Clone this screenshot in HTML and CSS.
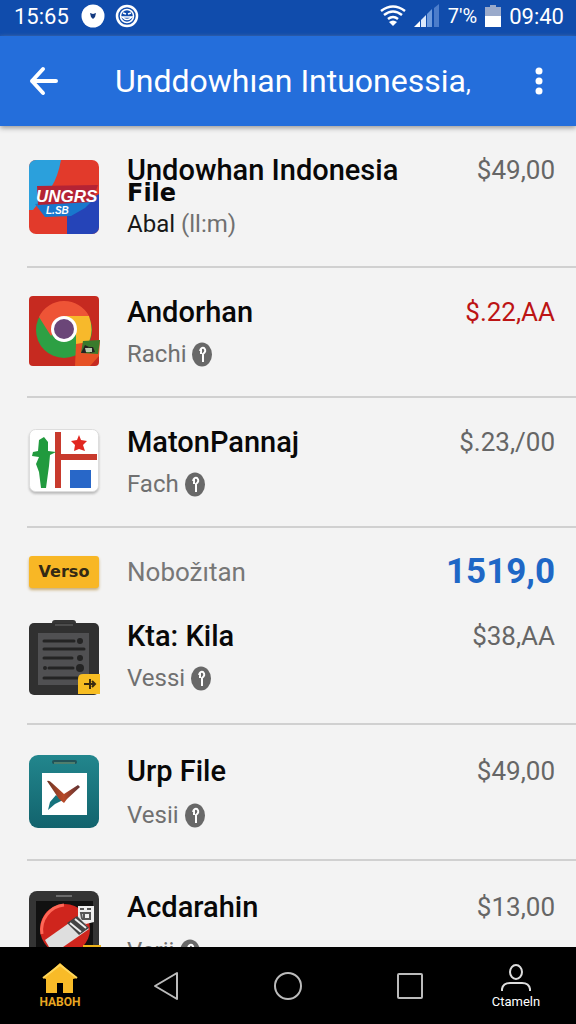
FILE: index.html
```html
<!DOCTYPE html>
<html lang="id">
<head>
    <meta charset="UTF-8">
    <meta name="viewport" content="width=device-width, initial-scale=1.0">
    <title>Unddowhıan Intuonessia</title>
    <link rel="stylesheet" href="styles.css">
</head>
<body>
    <div class="status-bar">
        <span>15:65</span>
        <svg class="status-dot" viewBox="0 0 24 24" width="24" height="24">
            <circle cx="12" cy="12" r="11.5" fill="#fff"/>
            <path d="M9 9l3 1 3-1-1 4-2 2-2-2z" fill="#143a80"/>
        </svg>
        <svg viewBox="0 0 24 24" width="24" height="24" fill="none" stroke="#fff">
            <circle cx="12" cy="12" r="10" stroke-width="2.5"/>
            <circle cx="12" cy="12" r="6.5" stroke-width="1.5"/>
            <path d="M8 9l3 1M16 9l-3 1M7 13q5 5 10 0z" stroke-width="1.5"/>
        </svg>
        <div class="status-right">
            <svg viewBox="0 0 26 22" width="26" height="22" fill="none" stroke="#fff" stroke-width="2.5">
                <path d="M1 6q12-9 24 0M4 10q9-7 18 0M8 14q5-4 10 0"/>
                <path d="M9 17q4-3 8 0l-4 4z" fill="#fff" stroke="none"/>
            </svg>
            <svg viewBox="0 0 26 24" width="26" height="24">
                <path d="M0 23l6-6v6z" fill="#fff"/>
                <path d="M7 16l5-5v12H7z" fill="#dce8fa"/>
                <path d="M13 10l5-5v18h-5z" fill="#6f9bdc"/>
                <path d="M20 4l5-4v23h-5z" fill="#4c7dcb"/>
            </svg>
            <span class="percent">7'%</span>
            <svg viewBox="0 0 16 24" width="16" height="24">
                <path d="M5 1h6v2h5v20H0V3h5z" fill="#9aaacb"/>
                <path d="M0 12h16v11H0z" fill="#fff"/>
            </svg>
            <span>09:40</span>
        </div>
    </div>

    <header class="app-bar">
        <button class="icon-button" aria-label="Back">
            <svg viewBox="0 0 30 30" width="30" height="30" fill="none" stroke="#fff" stroke-width="4" stroke-linecap="round" stroke-linejoin="round">
                <path d="M27 15H3M14 3L3 15l11 12"/>
            </svg>
        </button>
        <h1>Unddowhıan Intuonessia<small>,</small></h1>
        <button class="icon-button" aria-label="Menu">
            <svg viewBox="0 0 8 28" width="8" height="28" fill="#fff">
                <circle cx="4" cy="4" r="3.5"/><circle cx="4" cy="14" r="3.5"/><circle cx="4" cy="24" r="3.5"/>
            </svg>
        </button>
    </header>

    <main class="list">
        <article class="item item-first">
            <svg class="app-icon" viewBox="0 0 70 74" width="70" height="74">
                <clipPath id="tile"><rect width="70" height="74" rx="7"/></clipPath>
                <g clip-path="url(#tile)">
                    <path d="M0 0h70v74H0z" fill="#e23a2b"/>
                    <path d="M0 0h32q-3 16-9 26L4 50H0z" fill="#2ba0dc"/>
                    <path d="M38 52l32-18v40H38z" fill="#2544b8"/>
                    <path d="M6 44l60-6-10 10-14 8-26 1z" fill="#1878cd"/>
                    <path d="M8 26l61-1-6 17-54 3z" fill="#b42335"/>
                    <text x="7" y="42" class="logo-text" font-size="17">UNGRS</text>
                    <text x="17" y="54" class="logo-text" font-size="10">L.SB</text>
                </g>
            </svg>
            <div>
                <h2>Undowhan Indonesia</h2>
                <h3>File</h3>
                <p><span class="author">Abal</span> (ll:m)</p>
            </div>
            <span class="price">$49,00</span>
        </article>

        <article class="item">
            <svg class="app-icon" viewBox="0 0 72 70" width="72" height="70">
                <rect width="70" height="70" rx="4" fill="#c62a20"/>
                <circle cx="35" cy="34" r="28" fill="#2da044"/>
                <path d="M10 21A28 28 0 0 1 60 20H36L22 40z" fill="#ee5436"/>
                <path d="M36 20h24q5 14 0 26L47 62V36z" fill="#f7b92b"/>
                <circle cx="35" cy="33" r="13" fill="#fff"/>
                <circle cx="35" cy="33" r="10" fill="#6b4678"/>
                <path d="M47 48l24-4-1 16-9 10H46z" fill="#e65124"/>
                <path d="M54 45l17-1-2 14-17-1z" fill="#397b2c"/>
                <path d="M52 57l4-8 4 2-3 6zm8-6h4l2 5-5 1z" fill="#222"/>
                <path d="M56 52h7v4h-6z" fill="#b7c9ac"/>
            </svg>
            <div>
                <h2>Andorhan</h2>
                <p>Rachi <svg class="info" viewBox="0 0 20 25" width="20" height="25"><ellipse cx="10" cy="12.5" rx="10" ry="12" fill="#686868"/><path d="M8 9q1-4 4-3 3 3-1 6v8M9 7v5" fill="none" stroke="#fff" stroke-width="2"/></svg></p>
            </div>
            <span class="price price-red">$.22,AA</span>
        </article>

        <article class="item">
            <svg class="app-icon map-icon" viewBox="0 0 70 64" width="70" height="64">
                <rect x=".5" y=".5" width="69" height="62" rx="6" fill="#fff" stroke="#ddd"/>
                <path d="M26 3h6v22h36v6H32v28h-6z" fill="#c83a2d"/>
                <path d="M10 11l5-3 4 5v9l8 1-6 3-1 11-3 22h-5L10 43 7 35l3-7-7-1 1-4 5-1z" fill="#219a3e"/>
                <path d="M50 6l2 5 6 1-4 4 2 6-6-2-5 2 1-6-4-4 6-1z" fill="#e12720"/>
                <rect x="41" y="41" width="21" height="18" fill="#2867c8"/>
            </svg>
            <div>
                <h2>MatonPannaj</h2>
                <p>Fach <svg class="info" viewBox="0 0 20 25" width="20" height="25"><ellipse cx="10" cy="12.5" rx="10" ry="12" fill="#686868"/><path d="M8 9q1-4 4-3 3 3-1 6v8M9 7v5" fill="none" stroke="#fff" stroke-width="2"/></svg></p>
            </div>
            <span class="price">$.23,/00</span>
        </article>

        <article class="item item-version">
            <span class="version-badge">Verso</span>
            <div class="version-name">Nobožıtan</div>
            <span class="total">1519,0</span>
        </article>

        <article class="item item-after">
            <svg class="app-icon" viewBox="0 0 72 75" width="72" height="75">
                <rect x="23" width="24" height="9" rx="3" fill="#363636"/>
                <rect y="3" width="70" height="72" rx="5" fill="#303030"/>
                <path d="M26 5h18" stroke="#4c4c4c" stroke-width="2"/>
                <rect x="9" y="13" width="51" height="52" fill="#505052"/>
                <path d="M15 21h30M15 29h40M15 38h28M20 48h24M15 58h38" stroke="#242424" stroke-width="3" stroke-linecap="round"/>
                <g fill="#242424"><circle cx="51" cy="21" r="3"/><circle cx="51" cy="38" r="3"/><circle cx="51" cy="48" r="4"/><circle cx="16" cy="48" r="2"/></g>
                <path d="M54 54h17v20H49V59q0-5 5-5z" fill="#f7bd22"/>
                <path d="M55 64h11M61 59v10M63 61l3 3-3 3" stroke="#3a2b10" stroke-width="2" fill="none"/>
            </svg>
            <div>
                <h2>Kta: Kila</h2>
                <p>Vessi <svg class="info" viewBox="0 0 20 25" width="20" height="25"><ellipse cx="10" cy="12.5" rx="10" ry="12" fill="#686868"/><path d="M8 9q1-4 4-3 3 3-1 6v8M9 7v5" fill="none" stroke="#fff" stroke-width="2"/></svg></p>
            </div>
            <span class="price">$38,AA</span>
        </article>

        <article class="item item-roomy">
            <svg class="app-icon" viewBox="0 0 70 73" width="70" height="73">
                <defs>
                    <linearGradient id="teal" x2="0" y2="1"><stop stop-color="#22868d"/><stop offset="1" stop-color="#12636d"/></linearGradient>
                    <linearGradient id="tick"><stop stop-color="#6b3526"/><stop offset=".5" stop-color="#b94927"/><stop offset="1" stop-color="#5b3034"/></linearGradient>
                </defs>
                <rect width="70" height="73" rx="9" fill="url(#teal)"/>
                <rect x="23" y="5" width="25" height="4" rx="2" fill="#215258"/>
                <path d="M25 8h21" stroke="#7eaa83"/>
                <rect x="13" y="18" width="45" height="42" fill="#fff"/>
                <path d="M27 40l7 5-8 4-7 6 2-8z" fill="#16727c"/>
                <path d="M18 26q2-1 5 2l12 11 14-9 2 2-13 12-3 4-5-4z" fill="url(#tick)"/>
            </svg>
            <div>
                <h2>Urp File</h2>
                <p>Vesii <svg class="info" viewBox="0 0 20 25" width="20" height="25"><ellipse cx="10" cy="12.5" rx="10" ry="12" fill="#686868"/><path d="M8 9q1-4 4-3 3 3-1 6v8M9 7v5" fill="none" stroke="#fff" stroke-width="2"/></svg></p>
            </div>
            <span class="price">$49,00</span>
        </article>

        <article class="item item-roomy">
            <svg class="app-icon" viewBox="0 0 72 74" width="72" height="74">
                <rect width="70" height="74" rx="8" fill="#343434"/>
                <rect x="7" y="10" width="57" height="64" fill="#111"/>
                <path d="M27 5h16" stroke="#6c6c6c" stroke-width="2"/>
                <circle cx="36" cy="38" r="25" fill="#cf251d"/>
                <path d="M13 43a25 25 0 0 1 22-29" stroke="#ff6756" stroke-width="3" fill="none"/>
                <path d="M49 15h16v16l-8 2-8-5z" fill="#eee"/>
                <path d="M51 18h4m3 0h4M52 22h9v6h-8zM55 22v6" fill="none" stroke="#555" stroke-width="2"/>
                <path d="M16 49l34-24 10 13-36 25z" fill="#dedede"/>
                <path d="M38 32l10-7 12 12-10 7z" fill="#444"/>
                <path d="M41 32l11 9m-6-13l11 9" stroke="#eee" stroke-width="2"/>
                <path d="M54 54h18v20H54z" fill="#efb41c"/>
            </svg>
            <div>
                <h2>Acdarahin</h2>
                <p>Verii <svg class="info" viewBox="0 0 20 25" width="20" height="25"><ellipse cx="10" cy="12.5" rx="10" ry="12" fill="#686868"/><path d="M8 9q1-4 4-3 3 3-1 6v8M9 7v5" fill="none" stroke="#fff" stroke-width="2"/></svg></p>
            </div>
            <span class="price">$13,00</span>
        </article>
    </main>

    <nav class="bottom-nav">
        <a class="nav-home" href="#">
            <svg viewBox="0 0 36 30" width="36" height="30">
                <path d="M18 0L1 15l3 1v14h11v-10h6v10h10V16l4-1z" fill="#f8bb28"/>
                <path d="M1 15L18 2l17 13" fill="none" stroke="#ffd65a" stroke-width="2"/>
            </svg>
            <span>HABOH</span>
        </a>
        <button aria-label="Back">
            <svg viewBox="0 0 28 30" width="28" height="30"><path d="M25 2v26L3 15z" fill="none" stroke="#bbb" stroke-width="2" stroke-linejoin="round"/></svg>
        </button>
        <button aria-label="Home">
            <svg viewBox="0 0 30 30" width="30" height="30"><circle cx="15" cy="15" r="13" fill="none" stroke="#bbb" stroke-width="2"/></svg>
        </button>
        <button aria-label="Recent">
            <svg viewBox="0 0 28 28" width="28" height="28"><rect x="2" y="2" width="24" height="24" rx="1" fill="none" stroke="#bbb" stroke-width="2"/></svg>
        </button>
        <a href="#">
            <svg viewBox="0 0 32 30" width="32" height="30" fill="none" stroke="#ddd" stroke-width="2">
                <ellipse cx="16" cy="9" rx="6" ry="7"/>
                <path d="M2 28v-2q1-6 8-6h12q7 0 8 6v2"/>
            </svg>
            <span>Ctameln</span>
        </a>
    </nav>
</body>
</html>
```
FILE: styles.css
```css
* {
    box-sizing: border-box;
}

body {
    margin: 0;
    height: 100vh;
    display: flex;
    flex-direction: column;
    font-family: Roboto, sans-serif;
    background-color: #f3f3f3;
    color: #080808;
}

h1, h2, h3, p {
    margin: 0;
}

svg {
    display: block;
    flex-shrink: 0;
}

button {
    padding: 0;
    border: 0;
    background: none;
}

.status-bar {
    height: 36px;
    flex-shrink: 0;
    display: flex;
    align-items: center;
    gap: 10px;
    padding: 0 12px 4px 14px;
    background-color: #104cac;
    color: #fff;
    font-size: 22px;
}

.status-dot {
    margin-left: 2px;
}

.status-right {
    display: flex;
    align-items: center;
    gap: 8px;
    margin-left: auto;
}

.percent {
    font-size: 20px;
}

.app-bar {
    height: 90px;
    flex-shrink: 0;
    display: flex;
    align-items: center;
    padding: 0 33px 0 29px;
    background-color: #246edb;
    color: #fff;
    box-shadow: 0 2px 5px #999;
    z-index: 1;
}

.app-bar h1 {
    flex: 1;
    margin-left: 56px;
    font-size: 32px;
    font-weight: 400;
    white-space: nowrap;
}

.app-bar small {
    font-size: 24px;
}

.list {
    flex: 1;
    min-height: 0;
    overflow-y: auto;
    scrollbar-width: none;
    padding-left: 27px;
}

.item {
    display: grid;
    grid-template-columns: 70px 1fr auto;
    column-gap: 28px;
    align-items: start;
    padding: 28px 21px 28px 2px;
    border-bottom: 2px solid #d0d0d0;
}

.item h2 {
    font-size: 29px;
    line-height: 32px;
    font-weight: 500;
    white-space: nowrap;
}

.item p {
    display: flex;
    align-items: center;
    gap: 6px;
    margin-top: 12px;
    font-size: 24px;
    line-height: 28px;
    color: #707070;
}

.price {
    font-size: 26px;
    line-height: 32px;
    color: #666;
}

.price-red {
    color: #bc1414;
}

.item-first .app-icon {
    margin-top: 6px;
}

.item-first h3 {
    font: bold 24px/14px "DejaVu Sans", sans-serif;
}

.item-first p {
    margin-top: 10px;
}

.author {
    color: #181818;
}

.logo-text {
    fill: #fff;
    font-family: "Liberation Sans", sans-serif;
    font-weight: bold;
    font-style: italic;
}

.map-icon {
    margin-top: 3px;
    filter: drop-shadow(0 2px 1px #bbb);
}

.item-version {
    padding-bottom: 0;
    border-bottom: 0;
}

.version-badge {
    height: 32px;
    border-radius: 3px;
    background-color: #f8b725;
    box-shadow: 0 2px 3px #c9ae78;
    color: #332914;
    font: bold 16px/32px "DejaVu Sans", sans-serif;
    text-align: center;
}

.version-name {
    font-size: 26px;
    line-height: 32px;
    color: #777;
}

.total {
    font-size: 35px;
    line-height: 32px;
    font-weight: 700;
    color: #1e67c6;
}

.item-after {
    padding-top: 32px;
}

.item-roomy {
    padding-top: 30px;
    padding-bottom: 30px;
}

.item-roomy p {
    margin-top: 14px;
}

.bottom-nav {
    height: 77px;
    flex-shrink: 0;
    display: grid;
    grid-template-columns: 30fr 23fr 38fr 23fr 30fr;
    align-items: center;
    justify-items: center;
    background-color: #000;
}

.bottom-nav a {
    display: flex;
    flex-direction: column;
    align-items: center;
    gap: 2px;
    color: #fff;
    font-size: 13px;
    line-height: 14px;
    text-decoration: none;
}

.bottom-nav .nav-home {
    color: #e9a722;
    font-size: 12px;
    font-weight: 700;
}
```
